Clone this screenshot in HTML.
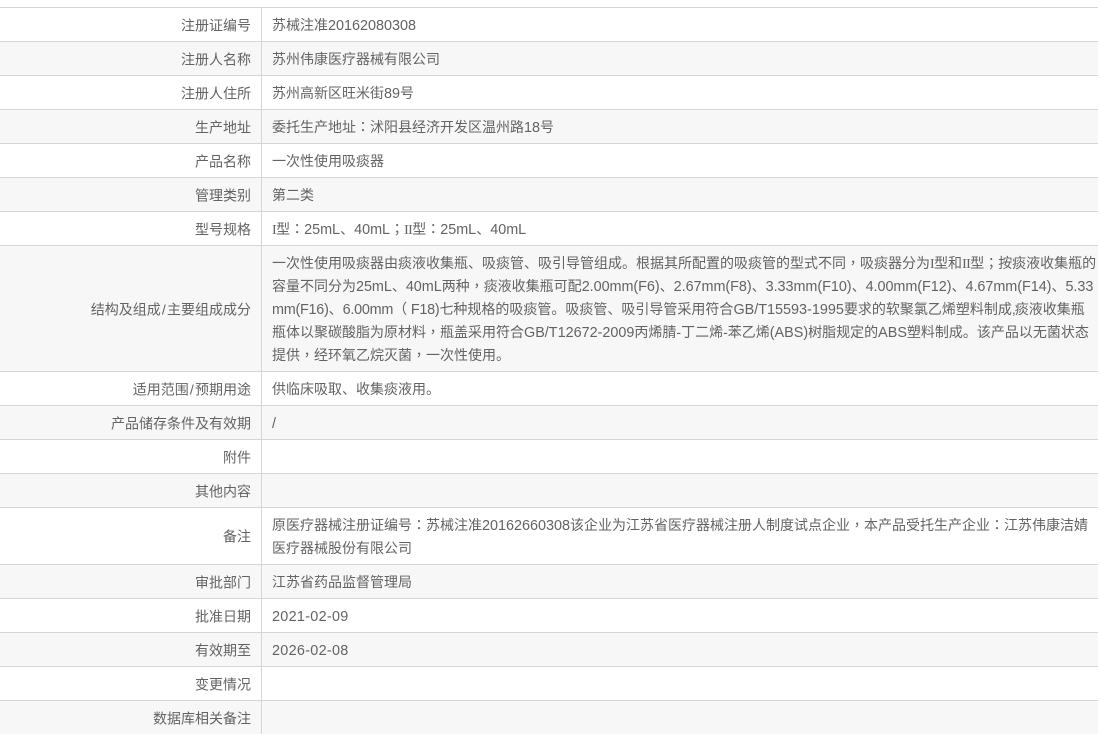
<!DOCTYPE html>
<html>
<head>
<meta charset="utf-8">
<title>注册信息</title>
<style>
html,body{margin:0;padding:0;background:#fff;}
body{width:1098px;height:728px;overflow:hidden;position:relative;font-family:"Liberation Sans","Noto Sans CJK SC",sans-serif;font-size:14px;color:#636363;}
.r{position:absolute;left:0;width:1098px;box-sizing:border-box;border-top:1px solid #d5d5d5;}
.r.g{background:#f7f7f7;}
.l{position:absolute;left:0;top:0;bottom:0;width:261px;border-right:1px solid #d5d5d5;box-sizing:content-box;}
.k{position:absolute;right:10px;top:50%;margin-top:1px;transform:translateY(-50%);white-space:nowrap;line-height:23px;}
.v{position:absolute;left:272px;top:6px;white-space:nowrap;line-height:23px;}
i{font-style:normal;font-size:14.4px;line-height:0;}
i.a{letter-spacing:-.04px;}
i.c{letter-spacing:-.25px;}
i.d{letter-spacing:.3px;}
b{font-weight:normal;line-height:0;font-family:"Liberation Sans","Noto Sans CJK TC",sans-serif;}
u{text-decoration:none;line-height:0;font-family:"Liberation Serif",serif;letter-spacing:-.6px;}
s{text-decoration:none;letter-spacing:-1px;}
em{font-style:normal;padding:0 1.2px;line-height:0;}
</style>
</head>
<body>
<div class="r" style="top:7px;height:34px"><div class="l"><span class="k">注册证编号</span></div><div class="v">苏械注准<i>20162080308</i></div></div>
<div class="r g" style="top:41px;height:34px"><div class="l"><span class="k">注册人名称</span></div><div class="v">苏州伟康医疗器械有限公司</div></div>
<div class="r" style="top:75px;height:34px"><div class="l"><span class="k">注册人住所</span></div><div class="v">苏州高新区旺米街<i>89</i>号</div></div>
<div class="r g" style="top:109px;height:34px"><div class="l"><span class="k">生产地址</span></div><div class="v">委托生产地址<b>：</b>沭阳县经济开发区温州路<i>18</i>号</div></div>
<div class="r" style="top:143px;height:34px"><div class="l"><span class="k">产品名称</span></div><div class="v">一次性使用吸痰器</div></div>
<div class="r g" style="top:177px;height:34px"><div class="l"><span class="k">管理类别</span></div><div class="v">第二类</div></div>
<div class="r" style="top:211px;height:34px"><div class="l"><span class="k">型号规格</span></div><div class="v"><u>I</u>型<b>：</b><i>25mL</i>、<i>40mL</i><b>；</b><u>II</u>型<b>：</b><i>25mL</i>、<i>40mL</i></div></div>
<div class="r g" style="top:245px;height:126px"><div class="l"><span class="k">结构及组成<em>/</em>主要组成成分</span></div><div class="v">一次性使用吸痰器由痰液收集瓶、吸痰管、吸引导管组成。根据其所配置的吸痰管的型式不同<b>，</b>吸痰器分为<u>I</u>型和<u>II</u>型<b>；</b>按痰液收集瓶的<br>容量不同分为<i class="a">25mL</i>、<i class="a">40mL</i>两种<b>，</b>痰液收集瓶可配<i class="a">2.00mm(F6)</i>、<i class="a">2.67mm(F8)</i>、<i class="a">3.33mm(F10)</i>、<i class="a">4.00mm(F12)</i>、<i class="a">4.67mm(F14)</i>、<i class="a">5.33</i><br><i class="c">mm(F16)</i>、<i class="c">6.00mm</i><b>（</b><i class="c">&nbsp;F18)</i>七种规格的吸痰管。吸痰管、吸引导管采用符合<i>GB/T15593-1995</i>要求的软聚氯乙烯塑料制成<s>,</s>痰液收集瓶<br>瓶体以聚碳酸脂为原材料<b>，</b>瓶盖采用符合<i>GB/T12672-2009</i>丙烯腈-丁二烯-苯乙烯<i>(ABS)</i>树脂规定的<i>ABS</i>塑料制成。该产品以无菌状态<br>提供<b>，</b>经环氧乙烷灭菌<b>，</b>一次性使用。</div></div>
<div class="r" style="top:371px;height:34px"><div class="l"><span class="k">适用范围<em>/</em>预期用途</span></div><div class="v">供临床吸取、收集痰液用。</div></div>
<div class="r g" style="top:405px;height:34px"><div class="l"><span class="k">产品储存条件及有效期</span></div><div class="v"><i>/</i></div></div>
<div class="r" style="top:439px;height:34px"><div class="l"><span class="k">附件</span></div></div>
<div class="r g" style="top:473px;height:34px"><div class="l"><span class="k">其他内容</span></div></div>
<div class="r" style="top:507px;height:57px"><div class="l"><span class="k">备注</span></div><div class="v">原医疗器械注册证编号<b>：</b>苏械注准<i>20162660308</i>该企业为江苏省医疗器械注册人制度试点企业<b>，</b>本产品受托生产企业<b>：</b>江苏伟康洁婧<br>医疗器械股份有限公司</div></div>
<div class="r g" style="top:564px;height:34px"><div class="l"><span class="k">审批部门</span></div><div class="v">江苏省药品监督管理局</div></div>
<div class="r" style="top:598px;height:34px"><div class="l"><span class="k">批准日期</span></div><div class="v"><i class="d">2021-02-09</i></div></div>
<div class="r g" style="top:632px;height:34px"><div class="l"><span class="k">有效期至</span></div><div class="v"><i class="d">2026-02-08</i></div></div>
<div class="r" style="top:666px;height:34px"><div class="l"><span class="k">变更情况</span></div></div>
<div class="r g" style="top:700px;height:34px"><div class="l"><span class="k">数据库相关备注</span></div></div>
</body>
</html>
